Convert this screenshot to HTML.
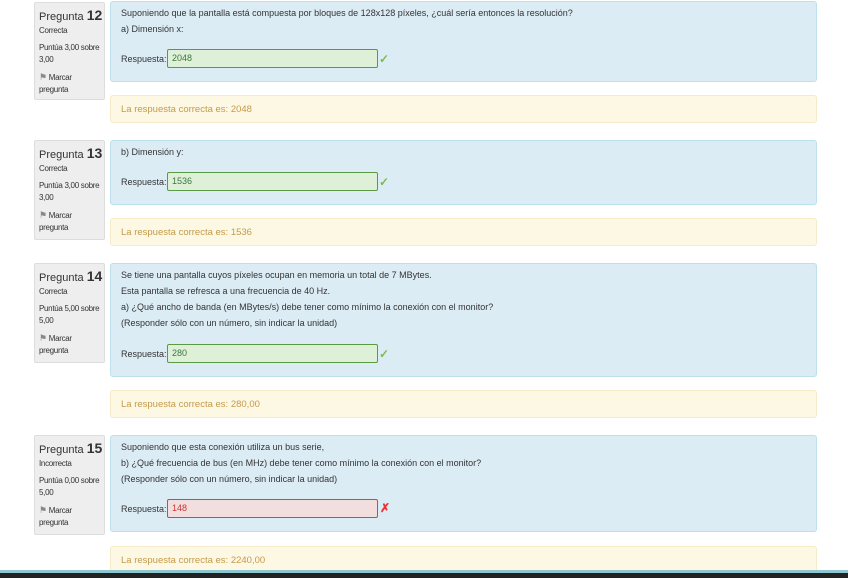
<!DOCTYPE html>
<html><head><meta charset="utf-8"><style>
body{margin:0;width:848px;height:578px;background:#fff;position:relative;overflow:hidden;font-family:"Liberation Sans",Arial,sans-serif;font-size:9px;color:#333}
.info{position:absolute;left:34px;width:71px;background:#eee;border:1px solid #ddd;border-radius:2px;box-sizing:border-box;font-size:8px;letter-spacing:-0.3px}
.info div{position:absolute;left:4px;white-space:nowrap}
.pg{font-size:11px;top:4px;letter-spacing:0}
.pg b{font-size:14px}
.q{position:absolute;left:110px;width:707px;background:#dcecf5;border:1px solid #bde0ee;border-radius:3px;box-sizing:border-box}
.q .t{position:absolute;left:10px;white-space:nowrap}
.inp{position:absolute;left:56px;width:211px;height:19px;box-sizing:border-box;border:1px solid #5a9a45;background:#dff0d8;border-radius:2px;color:#3c763d;padding:3px 4px;font-size:9px}
.bad{border-color:#c9494a;background:#f2dede;color:#c33}
.ok{position:absolute;left:268px;color:#7cbd4a;font-size:12px;font-weight:bold}
.x{position:absolute;left:269px;color:#e33;font-size:12px;font-weight:bold}
.fb{position:absolute;left:110px;width:707px;height:28px;background:#fcf8e3;border:1px solid #f5ebc9;border-radius:3px;box-sizing:border-box;color:#c59a4a;padding:8px 10px;font-size:9.5px}
.flag{color:#888;font-size:9px}
</style></head><body>

<div class="info" style="top:2px;height:98px"><div class="pg">Pregunta <b>12</b></div><div style="top:23px">Correcta</div><div style="top:40px">Puntúa 3,00 sobre</div><div style="top:52px">3,00</div><div style="top:69px"><span class="flag">&#9873;</span> Marcar</div><div style="top:82px">pregunta</div></div>
<div class="q" style="top:1px;height:81px"><div class="t" style="top:6px">Suponiendo que la pantalla está compuesta por bloques de 128x128 píxeles, ¿cuál sería entonces la resolución?</div><div class="t" style="top:22px">a) Dimensión x:</div><div class="t" style="top:52px">Respuesta:</div><div class="inp" style="top:47px">2048</div><div class="ok" style="top:50px">✓</div></div>
<div class="fb" style="top:95px">La respuesta correcta es: 2048</div>

<div class="info" style="top:140px;height:100px"><div class="pg">Pregunta <b>13</b></div><div style="top:23px">Correcta</div><div style="top:40px">Puntúa 3,00 sobre</div><div style="top:52px">3,00</div><div style="top:69px"><span class="flag">&#9873;</span> Marcar</div><div style="top:82px">pregunta</div></div>
<div class="q" style="top:140px;height:65px"><div class="t" style="top:6px">b) Dimensión y:</div><div class="t" style="top:36px">Respuesta:</div><div class="inp" style="top:31px">1536</div><div class="ok" style="top:34px">✓</div></div>
<div class="fb" style="top:218px">La respuesta correcta es: 1536</div>

<div class="info" style="top:263px;height:100px"><div class="pg">Pregunta <b>14</b></div><div style="top:23px">Correcta</div><div style="top:40px">Puntúa 5,00 sobre</div><div style="top:52px">5,00</div><div style="top:69px"><span class="flag">&#9873;</span> Marcar</div><div style="top:82px">pregunta</div></div>
<div class="q" style="top:263px;height:114px"><div class="t" style="top:6px">Se tiene una pantalla cuyos píxeles ocupan en memoria un total de 7 MBytes.</div><div class="t" style="top:22px">Esta pantalla se refresca a una frecuencia de 40 Hz.</div><div class="t" style="top:38px">a) ¿Qué ancho de banda (en MBytes/s) debe tener como mínimo la conexión con el monitor?</div><div class="t" style="top:54px">(Responder sólo con un número, sin indicar la unidad)</div><div class="t" style="top:85px">Respuesta:</div><div class="inp" style="top:80px">280</div><div class="ok" style="top:83px">✓</div></div>
<div class="fb" style="top:390px">La respuesta correcta es: 280,00</div>

<div class="info" style="top:435px;height:100px"><div class="pg">Pregunta <b>15</b></div><div style="top:23px">Incorrecta</div><div style="top:40px">Puntúa 0,00 sobre</div><div style="top:52px">5,00</div><div style="top:69px"><span class="flag">&#9873;</span> Marcar</div><div style="top:82px">pregunta</div></div>
<div class="q" style="top:435px;height:97px"><div class="t" style="top:6px">Suponiendo que esta conexión utiliza un bus serie,</div><div class="t" style="top:22px">b) ¿Qué frecuencia de bus (en MHz) debe tener como mínimo la conexión con el monitor?</div><div class="t" style="top:38px">(Responder sólo con un número, sin indicar la unidad)</div><div class="t" style="top:68px">Respuesta:</div><div class="inp bad" style="top:63px">148</div><div class="x" style="top:65px">✗</div></div>
<div class="fb" style="top:546px">La respuesta correcta es: 2240,00</div>

<div style="position:absolute;left:0;top:570px;width:848px;height:3px;background:#8fc6d0"></div>
<div style="position:absolute;left:0;top:573px;width:848px;height:5px;background:#222"></div>
</body></html>
